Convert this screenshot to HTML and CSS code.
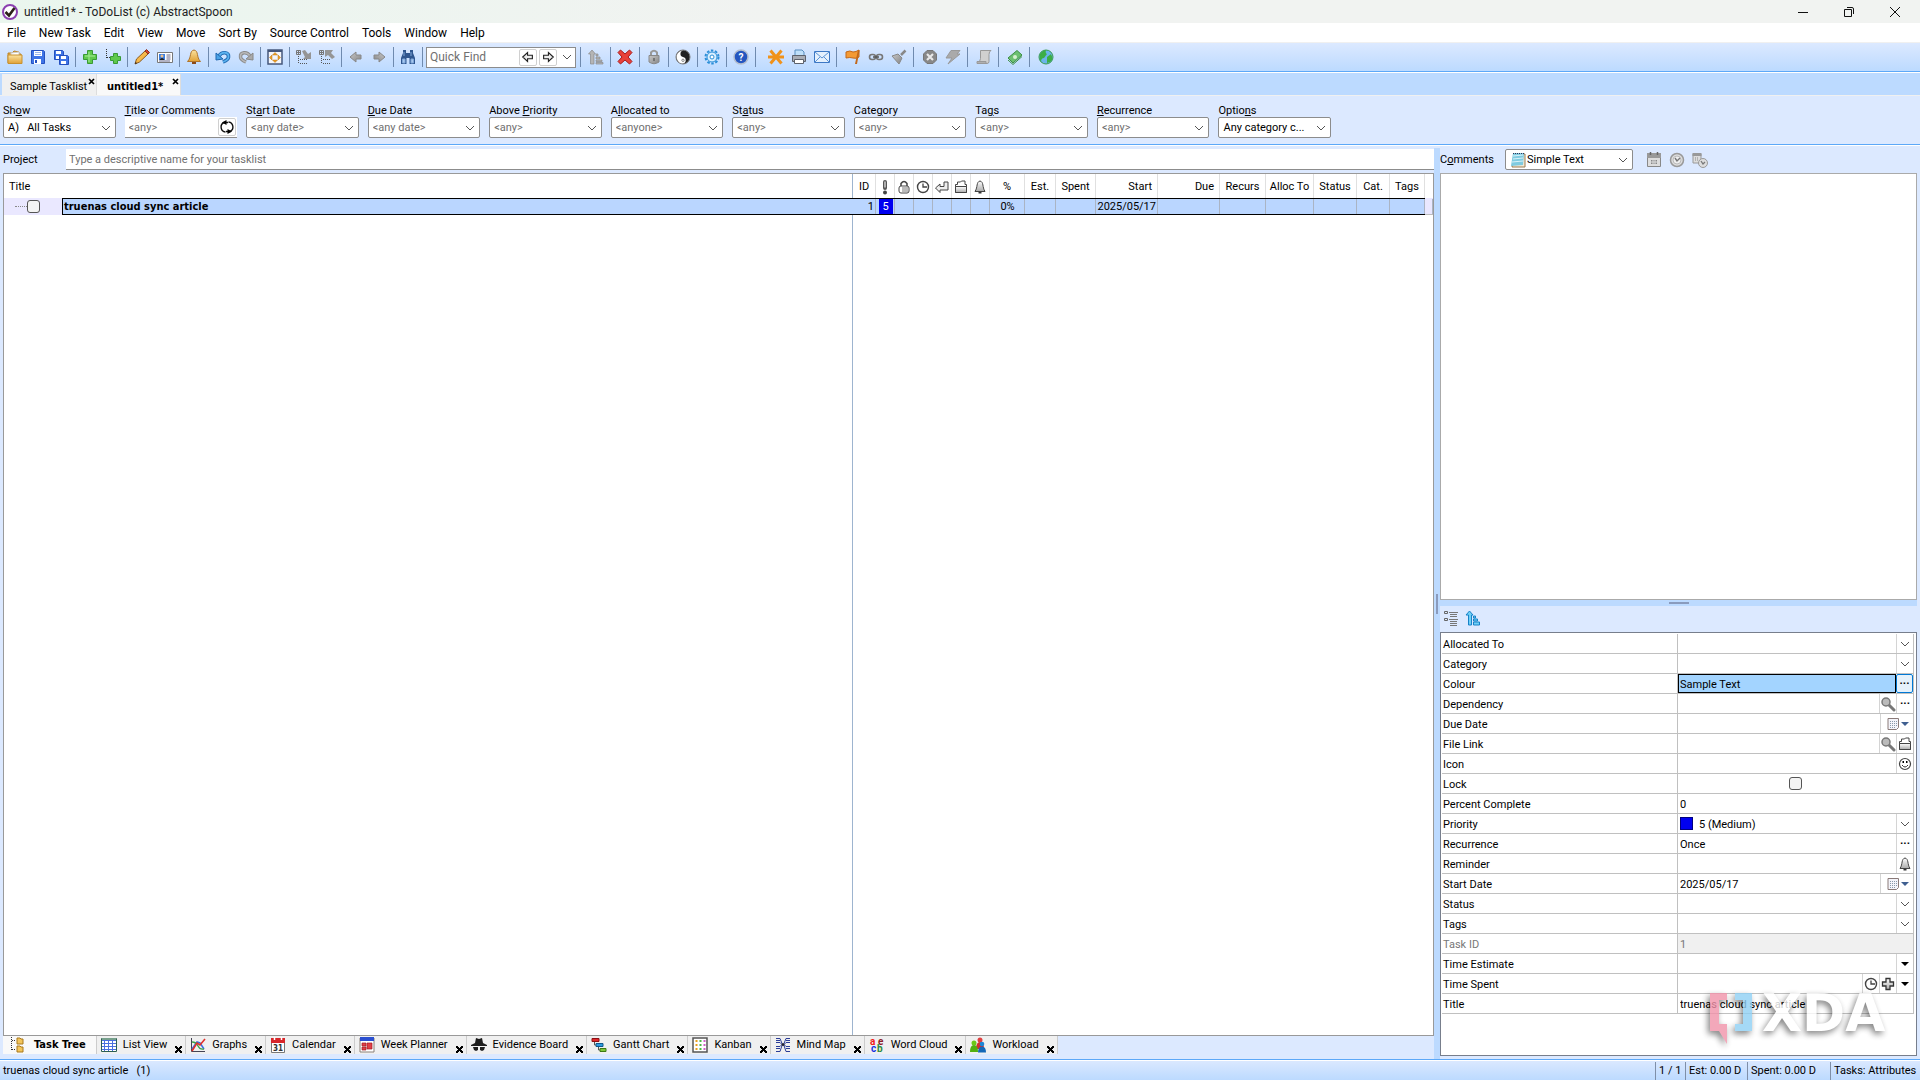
FILE: index.html
```
<!DOCTYPE html>
<html lang="en">
<head>
<meta charset="utf-8">
<title>untitled1* - ToDoList (c) AbstractSpoon</title>
<link rel="stylesheet" href="styles.css">
</head>
<body>
<svg class="defs" aria-hidden="true">
  <defs>
    <linearGradient id="g-gold" x1="0" y1="0" x2="0" y2="1"><stop offset="0" stop-color="#fbe3a0"/><stop offset="1" stop-color="#e0a136"/></linearGradient>
    <linearGradient id="g-grey" x1="0" y1="0" x2="1" y2="1"><stop offset="0" stop-color="#c8c8c8"/><stop offset="1" stop-color="#858585"/></linearGradient>
    <linearGradient id="g-steel" x1="0" y1="0" x2="0" y2="1"><stop offset="0" stop-color="#fff"/><stop offset="1" stop-color="#aaa"/></linearGradient>
  </defs>
  <symbol id="magnifier" viewBox="0 0 16 16"><path d="M9 9l5 5" stroke="#777" stroke-width="3" stroke-linecap="round"/><circle cx="6" cy="6" r="4" fill="#bbb" stroke="#777" stroke-width="1.5"/></symbol>
  <symbol id="bell" viewBox="0 0 16 16"><path d="M8 2c-4 1-2 6-5 10.500h10C10 8 12 3 8 2z" fill="url(#g-steel)" stroke="#444"/><path d="M6.500 13h3v1.500h-3z" fill="#333"/></symbol>
  <symbol id="clock" viewBox="0 0 16 16"><circle cx="8" cy="8" r="5.500" fill="#fff" stroke="#444" stroke-width="1.400"/><path d="M8 4.500V8h4" fill="none" stroke="#444" stroke-width="1.300"/></symbol>
  <symbol id="folder" viewBox="0 0 16 16"><path d="M2.500 13.500v-8h2V3h3l1-1H12v3.500h1.500v8z" fill="#fff" stroke="#444"/><path d="M2.500 7.500h11v6h-11z" fill="url(#g-steel)" stroke="#444"/></symbol>
  <symbol id="datepick" viewBox="0 0 16 16"><path d="M3 2.500h10.500v9l-2 2H3z" fill="#f4f4fa" stroke="#8a7a78"/><path d="M5 5.500h7M5 7.500h7M5 9.500h7M5 11.500h5" stroke="#89a" stroke-dasharray="1 1"/></symbol>
  <symbol id="left" viewBox="0 0 16 16"><path d="M2 8l6-5v3h5v4H8v3z" fill="url(#g-grey)" stroke="#888"/></symbol>
  <symbol id="outleft" viewBox="0 0 16 16"><path d="M2 8l5.500-5v3H13v4H7.500v3z" fill="#eee" stroke="#222" stroke-width="1.300"/></symbol>
</svg>

<div class="app">
  <header class="titlebar">
    <svg class="logo" viewBox="0 0 18 18"><circle cx="9" cy="9" r="7" fill="#fff" stroke="#8b3fb0" stroke-width="2"/><path d="M4.500 9l3.500 3.500L13.500 5" fill="none" stroke="#2a2018" stroke-width="2.600"/></svg>
    <h1>untitled1* - ToDoList (c) AbstractSpoon</h1>
    <div class="winbtns">
      <button aria-label="Minimize"><svg viewBox="0 0 12 12"><path d="M1 6.500h10" stroke="#111"/></svg></button>
      <button aria-label="Restore"><svg viewBox="0 0 12 12"><path d="M1.500 3.500h7v7h-7zM4 1.500h5q1.500 0 1.500 1.500v5" fill="none" stroke="#111"/></svg></button>
      <button aria-label="Close"><svg viewBox="0 0 12 12"><path d="M1 1l10 10M11 1L1 11" stroke="#111"/></svg></button>
    </div>
  </header>

  <nav class="menubar">
    <button>File</button><button>New Task</button><button>Edit</button><button>View</button><button>Move</button><button>Sort By</button><button>Source Control</button><button>Tools</button><button>Window</button><button>Help</button>
  </nav>

  <div class="toolbar" role="toolbar">
    <button aria-label="Open"><svg viewBox="0 0 16 16"><path d="M1 14V4h4l2-2 5 1v2h2v9z" fill="#e9a93a" stroke="#b9842b"/><path d="M4 4l8-1v4H4z" fill="#fff" stroke="#ccc"/><path d="M1 14.500V6h14v8.500z" fill="url(#g-gold)" stroke="#c8912f"/></svg></button>
    <button aria-label="Save"><svg viewBox="0 0 16 16"><path d="M1.500 1.500h12l1 1v12h-13z" fill="#3f74e6" stroke="#2450c0"/><path d="M4 2h8v5H4zM4 10h7v5H4z" fill="#fff"/><path d="M5 3.500h6M5 5.500h6" stroke="#9bb6ee"/><path d="M5 11h2v3H5z" fill="#2450c0"/></svg></button>
    <button aria-label="Save all"><svg viewBox="0 0 16 16"><g id="fl"><path d="M1.500 1.500h8l1 1v8h-9z" fill="#3f74e6" stroke="#2450c0"/><path d="M3 2h5v3H3zM3 7h5v3H3z" fill="#fff"/></g><use href="#fl" x="5" y="5"/></svg></button>
    <span class="sep"></span>
    <button aria-label="New task"><svg viewBox="0 0 16 16"><path d="M5.500 1.500h5v4h4v5h-4v4h-5v-4h-4v-5h4z" fill="#5fc94c" stroke="#3a9a35"/><path d="M7 3v10M3 7h10" stroke="#a8ec98"/></svg></button>
    <button aria-label="New subtask"><svg viewBox="0 0 16 16"><path d="M1.500 0v9M2 8.500h4" stroke="#333" stroke-dasharray="1 1"/><path d="M8.500 4.500h4v3h3v4h-3v3h-4v-3h-3v-4h3z" fill="#5fc94c" stroke="#3a9a35"/></svg></button>
    <span class="sep"></span>
    <button aria-label="Edit task"><svg viewBox="0 0 16 16"><path d="M1 15l1.500-5L11 2l3 3-8.500 8z" fill="#f6b94a" stroke="#8a5a20"/><path d="M11 2l1.500-1.500 3 3L14 5z" fill="#d8442e" stroke="#8a3020"/><path d="M1 15l.7-2 1.300 1.200z" fill="#222"/></svg></button>
    <button aria-label="Edit attributes"><svg viewBox="0 0 16 16"><path d="M.5 3.500h15v10H.5z" fill="#fff" stroke="#777"/><path d="M2 5h6v6H2z" fill="#3b7fe0"/><circle cx="5" cy="7" r="1.500" fill="#eec08a"/><path d="M2.500 11q2.500-4 5 0z" fill="#222"/><path d="M9.500 6h4M9.500 8h4M9.500 10h4M2 12h11" stroke="#668"/></svg></button>
    <span class="sep"></span>
    <button aria-label="Reminder"><svg viewBox="0 0 16 16"><path d="M8 1C3 2 6 8 1.500 12.500h13C10 8 13 2 8 1z" fill="url(#g-gold)" stroke="#b0752a"/><path d="M6 13h4v2H6z" fill="#8a4a18"/></svg></button>
    <span class="sep"></span>
    <button aria-label="Undo"><svg viewBox="0 0 16 16"><path d="M4 7c3-5 10-4 9.500 1-.3 3-3 4-5.500 5" fill="none" stroke="#1f67b0" stroke-width="3.600"/><path d="M4 7c3-5 10-4 9.500 1-.3 3-3 4-5.500 5" fill="none" stroke="#5bb2ee" stroke-width="1.800"/><path d="M1 4v7l7-1z" fill="#4aa3e6" stroke="#1f67b0"/></svg></button>
    <button aria-label="Redo"><svg viewBox="0 0 16 16"><path d="M12 7C9 2 2 3 2.500 8c.3 3 3 4 5.500 5" fill="none" stroke="#8a8a8a" stroke-width="3.400"/><path d="M12 7C9 2 2 3 2.500 8c.3 3 3 4 5.500 5" fill="none" stroke="#b8b8b8" stroke-width="1.600"/><path d="M15 4v7l-7-1z" fill="#aaa" stroke="#888"/></svg></button>
    <span class="sep"></span>
    <button aria-label="Maximize"><svg viewBox="0 0 16 16"><path d="M1 1h14v14H1z" fill="#f4f6fb" stroke="#46587c" stroke-width="1.500"/><path d="M1 2h14" stroke="#46587c" stroke-width="2"/><path d="M8 3.500l2.500 2.500h-5zM8 13.500L5.500 11h5zM2.500 8.500L5 6v5zM13.500 8.500L11 6v5z" fill="#f0a020" stroke="#b8741a" stroke-width=".5"/></svg></button>
    <span class="sep"></span>
    <button aria-label="Expand"><svg viewBox="0 0 16 16"><path d="M.5 1.500h4v4h-4zM2.500 1v5M0 3.500h5" fill="none" stroke="#777"/><path d="M2.500 7v8M4 10.500h8M4 14.500h8" fill="none" stroke="#555" stroke-dasharray="1 1"/><path d="M6 2l3-1 3 4 3-2v7H7l2-2z" fill="#959595"/></svg></button>
    <button aria-label="Collapse"><svg viewBox="0 0 16 16"><path d="M.5 1.500h4v4h-4zM2.500 1v5M0 3.500h5" fill="none" stroke="#777"/><path d="M2.500 7v8M4 10.500h8M4 14.500h8" fill="none" stroke="#555" stroke-dasharray="1 1"/><path d="M6 1h8l-2 3 4 4-3 2-4-4-3 2z" fill="#959595"/></svg></button>
    <span class="sep"></span>
    <button aria-label="Back"><svg><use href="#left"/></svg></button>
    <button aria-label="Forward"><svg class="flip"><use href="#left"/></svg></button>
    <span class="sep"></span>
    <button aria-label="Find tasks"><svg viewBox="0 0 16 16"><path d="M3 1h3v3h4V1h3v3l2 5v6H9.500V9h-3v6H1V9l2-5z" fill="#2f568f"/><path d="M2.500 10h2.500v4H2.500zM11 10h2.500v4H11zM4 3v4M11 3v4" fill="#a8c8ee" stroke="#7fa6d8"/></svg></button>
    <span class="sep"></span>
    <div class="find">
      <input type="text" placeholder="Quick Find" aria-label="Quick Find">
      <button aria-label="Find previous"><svg><use href="#outleft"/></svg></button>
      <button aria-label="Find next"><svg class="flip"><use href="#outleft"/></svg></button>
      <button class="drop" aria-label="Find history"><svg viewBox="0 0 10 10"><path d="M1 3l4 4 4-4" fill="none" stroke="#555"/></svg></button>
    </div>
    <span class="sep lead"></span>
    <button aria-label="Sort"><svg viewBox="0 0 16 16"><path d="M4 1l3.500 4H6v10H2.500V5H.5zM8 5h2v2H8zM8 8h4v2H8zM8 11h6v1.500H8zM8 13.500h7V15H8z" fill="#b5b5b5" stroke="#8a8a8a" stroke-width=".7"/></svg></button>
    <span class="sep"></span>
    <button aria-label="Delete"><svg viewBox="0 0 16 16"><path d="M1 3.500L3.500 1 8 5l4.500-4L15 3.500 11 8l4 4.500-2.500 2.500L8 11l-4.500 4L1 12.500 5 8z" fill="#e8413a" stroke="#a81c1c"/></svg></button>
    <span class="sep"></span>
    <button aria-label="Lock"><svg viewBox="0 0 16 16"><path d="M5 7V3.500q3-3.500 6 0V7" fill="none" stroke="#999" stroke-width="2"/><path d="M3 6.500h10V13q-5 3.500-10 0z" fill="url(#g-grey)" stroke="#888"/><path d="M8 9v3" stroke="#666" stroke-width="1.500"/></svg></button>
    <span class="sep"></span>
    <button aria-label="Style"><svg viewBox="0 0 16 16"><circle cx="8" cy="8" r="7" fill="#222" stroke="#777"/><path d="M9 1.500a3.300 3.300 0 0 0-1 6.500 3.300 3.300 0 0 1 0 6.500A6.500 6.500 0 0 1 4 3q2-2 5-1.500z" fill="#fff"/><circle cx="8.500" cy="4.700" r="1.200" fill="#222"/><circle cx="8" cy="11.300" r="1.200" fill="#fff" stroke="#222" stroke-width=".5"/></svg></button>
    <span class="sep"></span>
    <button aria-label="Preferences"><svg viewBox="0 0 16 16"><circle cx="8" cy="8" r="6.500" fill="none" stroke="#2b8fd8" stroke-width="2" stroke-dasharray="2.500 1.600"/><circle cx="8" cy="8" r="5" fill="#d8efff" stroke="#2b8fd8"/><circle cx="8" cy="8" r="2" fill="#fff" stroke="#2b8fd8"/></svg></button>
    <span class="sep"></span>
    <button aria-label="Help"><svg viewBox="0 0 16 16"><circle cx="8" cy="8" r="7" fill="#2456c0" stroke="#b4bece" stroke-width="1.500"/><text x="8" y="12" text-anchor="middle" class="glyph">?</text></svg></button>
    <span class="sep"></span><span class="space"></span>
    <button aria-label="New feature"><svg viewBox="0 0 16 16"><path d="M2.500 1.500l11 13M13.500 1.500l-11 13M0 8h16" stroke="#f0921a" stroke-width="3"/></svg></button>
    <button aria-label="Print"><svg viewBox="0 0 16 16"><path d="M4 7V1h7l2 2v4" fill="#bfe0fa" stroke="#5a8fc0"/><path d="M1.500 6.500h13v6h-13z" fill="#a9adb5" stroke="#5d626c"/><path d="M3.500 10.500h9v4h-9z" fill="#fff" stroke="#5d626c"/></svg></button>
    <button aria-label="Email"><svg viewBox="0 0 16 16"><path d="M.5 2.500h15v11H.5z" fill="#e4f0fd" stroke="#3d78c4"/><path d="M1 3l7 6 7-6M1 13l5-5M15 13l-5-5" fill="none" stroke="#5b93d6"/></svg></button>
    <span class="sep wide"></span>
    <button aria-label="Flag"><svg viewBox="0 0 16 16"><path d="M1 3q4-2 7 0 3 0 6-2v7q-3 2-6 1-3-1-7 0z" fill="#f49a34" stroke="#c2681a"/><path d="M13 1l1.500.5L12 15h-2z" fill="#c2681a"/></svg></button>
    <button aria-label="Link"><svg viewBox="0 0 16 16"><rect x="1.500" y="5.500" width="6" height="5" rx="2.500" fill="none" stroke="#777" stroke-width="1.600"/><rect x="8.500" y="5.500" width="6" height="5" rx="2.500" fill="none" stroke="#777" stroke-width="1.600"/><path d="M5 8h6" stroke="#555" stroke-width="1.500"/></svg></button>
    <button aria-label="Clean up"><svg viewBox="0 0 16 16"><path d="M14.500 1.500L10 6" stroke="#888" stroke-width="2.500"/><path d="M1 7l6-2 4 4-3 6z" fill="url(#g-grey)" stroke="#888"/></svg></button>
    <span class="sep wide"></span>
    <button aria-label="Cancel"><svg viewBox="0 0 16 16"><path d="M5 1.500h6L14.500 5v6L11 14.500H5L1.500 11V5z" fill="#888" stroke="#777"/><path d="M5 5l6 6M11 5l-6 6" stroke="#e8e8e8" stroke-width="2.200"/></svg></button>
    <button aria-label="Run"><svg viewBox="0 0 16 16"><path d="M6 1.500h9L12 5h3L3 15l4-6H1z" fill="#aaa" stroke="#999"/></svg></button>
    <span class="sep wide"></span>
    <button aria-label="Script"><svg viewBox="0 0 16 16"><path d="M4.500 1.500H15q-2 1-2 4v7q0 2-2 2H2q2-2 2.500-5z" fill="#d0d0d0" stroke="#999"/><path d="M1 12.500h9v2H1z" fill="#b0b0b0" stroke="#999"/></svg></button>
    <span class="sep wide"></span>
    <button aria-label="Donate"><svg viewBox="0 0 16 16"><path d="M1 9l9-7.500 5 4.500-9 8z" fill="#6cc070" stroke="#3d8f45"/><path d="M1 11l5 4.500 9-8" fill="none" stroke="#3d8f45"/><circle cx="8" cy="8" r="2" fill="#d6f0d0"/></svg></button>
    <span class="sep wide"></span>
    <button aria-label="Web site"><svg viewBox="0 0 16 16"><circle cx="8" cy="8" r="7" fill="#6ab4ea" stroke="#3a9a50"/><path d="M2 5q3-4 6-4-1 3 1 4l-3 4q-3 0-3 4-2-3-1-8zM9 8l4-3q2 3 1 6-2 3-5 3z" fill="#3cae46"/></svg></button>
  </div>

  <div class="tabs">
    <div class="tab"><a href="#sample">Sample Tasklist</a><button aria-label="Close Sample Tasklist"><svg viewBox="0 0 7 7"><path d="M1 1l5 5M6 1L1 6" stroke="#000" stroke-width="1.700"/></svg></button></div>
    <div class="tab on"><a href="#untitled">untitled1*</a><button aria-label="Close untitled1"><svg viewBox="0 0 7 7"><path d="M1 1l5 5M6 1L1 6" stroke="#000" stroke-width="1.700"/></svg></button></div>
  </div>

  <form class="filters">
    <label>Sh<u>o</u>w<select class="dark"><option>A) &nbsp; All Tasks</option></select></label>
    <div class="field"><label for="ftitle"><u>T</u>itle or Comments</label><span class="textbox"><input id="ftitle" type="text" placeholder="&lt;any&gt;"><button type="button" aria-label="Refresh"><svg viewBox="0 0 16 16"><path d="M6.500 13A5 5 0 0 1 5 3.500h4M9.500 3a5 5 0 0 1 1.500 9.500H7" fill="none" stroke="#111" stroke-width="1.400"/><path d="M7.500 1v5L3 3.500zM8.500 10v5l4.500-2.500z"/></svg></button></span></div>
    <label>St<u>a</u>rt Date<select><option>&lt;any date&gt;</option></select></label>
    <label><u>D</u>ue Date<select><option>&lt;any date&gt;</option></select></label>
    <label>Above <u>P</u>riority<select><option>&lt;any&gt;</option></select></label>
    <label>A<u>l</u>located to<select><option>&lt;anyone&gt;</option></select></label>
    <label>St<u>a</u>tus<select><option>&lt;any&gt;</option></select></label>
    <label>Cate<u>g</u>ory<select><option>&lt;any&gt;</option></select></label>
    <label>Ta<u>g</u>s<select><option>&lt;any&gt;</option></select></label>
    <label><u>R</u>ecurrence<select><option>&lt;any&gt;</option></select></label>
    <label>Optio<u>n</u>s<select class="dark"><option>Any category c...</option></select></label>
  </form>

  <main class="work">
    <section class="left">
      <div class="project"><label for="proj">Pro<u>j</u>ect</label><input id="proj" type="text" placeholder="Type a descriptive name for your tasklist"></div>
      <div class="tasklist">
        <table>
          <colgroup><col><col class="w-id"><col class="w-ic" span="6"><col class="w-pc"><col class="w-est"><col class="w-sp"><col class="w-date"><col class="w-date"><col class="w-rec"><col class="w-all"><col class="w-sta"><col class="w-cat"><col class="w-tag"><col class="w-end"></colgroup>
          <thead><tr>
            <th class="name">Title</th><th>ID</th>
            <th><svg viewBox="0 0 16 16"><path d="M8 3v6" stroke="#555" stroke-width="4" stroke-linecap="round"/><path d="M8 2.500v6" stroke="#ccc" stroke-width="1.500"/><circle cx="8" cy="13.500" r="2" fill="#444"/></svg></th>
            <th><svg viewBox="0 0 16 16"><path d="M5 7V4.500q3-4 6 0V7" fill="none" stroke="#444" stroke-width="1.500"/><rect x="3" y="7" width="10" height="7" rx="2" fill="#fff" stroke="#444"/><path d="M7 8v5M9 8v5M11 8v5" stroke="#777"/></svg></th>
            <th><svg><use href="#clock"/></svg></th>
            <th><svg viewBox="0 0 16 16"><path d="M1.500 9L6 5v2.500h4V3h4v8H6v2.500z" fill="#eee" stroke="#444"/></svg></th>
            <th><svg><use href="#folder"/></svg></th>
            <th><svg><use href="#bell"/></svg></th>
            <th>%</th><th>Est.</th><th>Spent</th><th class="r">Start</th><th class="r">Due</th><th>Recurs</th><th>Alloc To</th><th>Status</th><th>Cat.</th><th>Tags</th><th></th>
          </tr></thead>
          <tbody><tr>
            <td class="name"><div class="cell"><span class="tree"></span><input type="checkbox" aria-label="Done"><span class="task">truenas cloud sync article</span></div></td>
            <td class="r">1</td><td class="prio"><span>5</span></td><td></td><td></td><td></td><td></td><td></td><td>0%</td><td></td><td></td><td class="r">2025/05/17</td><td></td><td></td><td></td><td></td><td></td><td></td><td class="end"></td>
          </tr></tbody>
        </table>
      </div>
      <nav class="views">
        <a class="on" href="#tree"><svg viewBox="0 0 16 16"><path d="M1.500 0v14M2 3.500h4M2 12.500h4" stroke="#333" stroke-dasharray="1 1"/><path d="M7 1h3l1 1h2v5H7zM7 9h3l1 1h2v5H7z" fill="#f3c55a" stroke="#a9781c"/></svg>Task Tree</a>
        <a href="#list"><svg viewBox="0 0 16 16"><path d="M0 1h16v14H0z" fill="#fff"/><path d="M1 3.500h14M1 6.500h14M1 9.500h14M1 12.500h14M3.500 1v14M7.500 1v14M11.500 1v14" stroke="#4a6fe0"/><path d="M.5 1.500h15v13H.5z" fill="none" stroke="#2d5f50"/><path d="M1 2h14" stroke="#77a08c" stroke-width="2"/></svg>List View<i></i></a>
        <a href="#graphs"><svg viewBox="0 0 16 16"><path d="M1.500 1v13.500H15" fill="none" stroke="#445"/><path d="M2 12l5-7 3 1 4 6" fill="none" stroke="#3b6fe0" stroke-width="1.500"/><path d="M2 5q4 0 6 4t6 3" fill="none" stroke="#3aa04a" stroke-width="1.300"/><path d="M2 14l5-8 3 2 5-6" fill="none" stroke="#e0302a" stroke-width="1.600"/></svg>Graphs<i></i></a>
        <a href="#calendar"><svg viewBox="0 0 16 16"><path d="M1.500 2.500h13v13h-13z" fill="#fff" stroke="#777"/><path d="M1 1h14v5H1z" fill="#d8262a"/><path d="M4.500 0v3M11.500 0v3" stroke="#fff" stroke-width="1.500"/><text x="8" y="14" text-anchor="middle" class="day">31</text></svg>Calendar<i></i></a>
        <a href="#week"><svg viewBox="0 0 16 16"><path d="M1 1h14v14H1z" fill="#fff" stroke="#8a8078"/><path d="M1 0h14v4H1z" fill="#2a4fd0"/><path d="M3 6h4v3H3zM8 6h5v6H8zM3 10h4v3H3z" fill="#e04048" stroke="#a01820" stroke-width=".7"/></svg>Week Planner<i></i></a>
        <a href="#evidence"><svg viewBox="0 0 16 16"><path d="M4 6l1-5 3 1 3-1 1 5 4 2v1H0V8zM2 10h5v3l-2 1-2-1zM9 10h5l-1 3-2 1-2-1z" fill="#1c1c1c"/></svg>Evidence Board<i></i></a>
        <a href="#gantt"><svg viewBox="0 0 16 16"><path d="M1 1.500h7v3H1z" fill="#e0282c" stroke="#8c1014"/><path d="M5 6.500h7v3H5z" fill="#2b9be0" stroke="#10588c"/><path d="M9 11.500h6v3H9z" fill="#7fc83a" stroke="#3c7a14"/><path d="M3.500 5v3H5M7.500 10v3H9" fill="none" stroke="#555"/></svg>Gantt Chart<i></i></a>
        <a href="#kanban"><svg viewBox="0 0 16 16"><path d="M1 1h14v14H1z" fill="#fff" stroke="#555" stroke-width="1.500"/><path d="M4.500 3v11" stroke="#e8a020" stroke-width="2" stroke-dasharray="2 2"/><path d="M8.500 3v11" stroke="#50b848" stroke-width="2" stroke-dasharray="2 2"/><path d="M12.500 3v11" stroke="#d060c8" stroke-width="2" stroke-dasharray="2 2"/></svg>Kanban<i></i></a>
        <a href="#mindmap"><svg viewBox="0 0 16 16"><path d="M1 1.500h4l2 5M1 5.500h4l2 2M1 9.500h4l2-2M1 14.500h4l2-6M15 1.500h-4l-2 5M15 5.500h-4l-2 2M15 9.500h-4l-2-2M15 14.500h-4l-2-6M1 3.500h4M1 11.500h4M15 3.500h-4M15 11.500h-4" fill="none" stroke="#2a3c98"/><circle cx="8" cy="7.500" r="1.500" fill="#223"/></svg>Mind Map<i></i></a>
        <a href="#wordcloud"><svg viewBox="0 0 16 16"><text x="1" y="8" class="wc" fill="#f01818">a</text><text x="9" y="8" class="wc" fill="#8c1c28">e</text><text x="2" y="15" class="wc" fill="#1830e0">c</text><text x="8" y="15" class="wc" fill="#2c8a3c">b</text></svg>Word Cloud<i></i></a>
        <a href="#workload"><svg viewBox="0 0 16 16"><circle cx="10" cy="3" r="2.500" fill="#e04040"/><path d="M6 12q0-7 4-7t4 7z" fill="#d03030"/><circle cx="4" cy="6" r="2.500" fill="#6cc818"/><path d="M0 15q0-7 4-7t4 7z" fill="#52b010"/><circle cx="12" cy="7" r="2.300" fill="#1c86d8"/><path d="M8 15.500q0-6 4-6t4 6z" fill="#1468b8"/></svg>Workload<i></i></a>
      </nav>
    </section>

    <div class="vsplit"></div>

    <aside class="right">
      <div class="comhead">
        <label for="ctype">C<u>o</u>mments</label>
        <span class="ctype"><svg viewBox="0 0 16 16"><path d="M4 2h11v13H2z" fill="#f3e9d4" stroke="#9a7a50"/><path d="M3 1h11l-1 12-12 1z" fill="#7fcbe0"/><path d="M3 4l10-1M3 7l10-1M2 10l11-1" stroke="#d8f2fa"/><path d="M3 1.500h11" stroke="#335" stroke-dasharray="1 1"/></svg><select id="ctype" class="dark"><option>Simple Text</option></select></span>
        <button aria-label="Insert date"><svg viewBox="0 0 16 16"><path d="M1.500 2.500h13v12h-13z" fill="#ddd" stroke="#888"/><path d="M1 1h14v5H1z" fill="#999"/><path d="M4.500 0v3M11.500 0v3" stroke="#666" stroke-width="1.500"/><path d="M5 8h6v4H5z" fill="#888"/><path d="M5 10h6M7 8v4M9 8v4" stroke="#ddd"/></svg></button>
        <button aria-label="Insert time"><svg viewBox="0 0 16 16"><circle cx="8" cy="8" r="6.500" fill="#ddd" stroke="#999" stroke-width="1.500"/><circle cx="8" cy="8" r="4" fill="#eee" stroke="#bbb"/><path d="M6 6l2 3 3-3" fill="none" stroke="#777" stroke-width="1.400"/></svg></button>
        <button aria-label="Insert date and time"><svg viewBox="0 0 16 16"><path d="M1 2h8v9H1z" fill="#ddd" stroke="#999"/><path d="M.5 1h9v3h-9z" fill="#999"/><path d="M3 6h4M3 8h4" stroke="#888" stroke-dasharray="1 1"/><circle cx="11" cy="11" r="4.500" fill="#ddd" stroke="#999"/><path d="M9 9l2 3 2-2" fill="none" stroke="#777" stroke-width="1.300"/></svg></button>
      </div>
      <textarea aria-label="Comments"></textarea>
      <div class="hsplit"></div>
      <div class="atthead">
        <button aria-label="Group"><svg viewBox="0 0 16 16"><path d="M1.500 1.500h3v2h-3zM1.500 8.500h3v2h-3z" fill="none" stroke="#666"/><path d="M6 2.500h9M7 4.500h7M7 6.500h7M6 9.500h9M7 11.500h7M7 13.500h7M7 15.500h7" stroke="#777"/></svg></button>
        <button aria-label="Sort"><svg viewBox="0 0 16 16"><path d="M4.500 1l3.500 4H6.500v10h-3V5H1zM8.500 6h2v2h-2zM8.500 9h4v2h-4zM8.500 12h6v3h-6z" fill="#6fd0f6" stroke="#1682c8"/></svg></button>
      </div>
      <div class="attrs">
        <table>
          <tr><th><label for="a1">Allocated To</label></th><td><div><select id="a1"><option></option></select></div></td></tr>
          <tr><th><label for="a2">Category</label></th><td><div><select id="a2"><option></option></select></div></td></tr>
          <tr><th><label for="a3">Colour</label></th><td><div><input class="colour" id="a3" value="Sample Text"><button class="hot" aria-label="Choose colour">···</button></div></td></tr>
          <tr><th><label for="a4">Dependency</label></th><td><div><input id="a4"><button aria-label="Go to"><svg><use href="#magnifier"/></svg></button><button aria-label="Edit dependency">···</button></div></td></tr>
          <tr><th><label for="a5">Due Date</label></th><td><div><input id="a5"><button class="date" aria-label="Pick due date"><svg><use href="#datepick"/></svg><b></b></button></div></td></tr>
          <tr><th><label for="a6">File Link</label></th><td><div><input id="a6"><button aria-label="View file"><svg><use href="#magnifier"/></svg></button><button aria-label="Browse"><svg><use href="#folder"/></svg></button></div></td></tr>
          <tr><th><label for="a7">Icon</label></th><td><div><input id="a7"><button aria-label="Choose icon"><svg viewBox="0 0 16 16"><circle cx="8" cy="8" r="5.500" fill="#fff" stroke="#444" stroke-width="1.200"/><path d="M5 9q3 4 6 0" fill="none" stroke="#333"/><path d="M5.500 5h1.500v2H5.500zM9 5h1.500v2H9z"/></svg></button></div></td></tr>
          <tr><th><label for="a8">Lock</label></th><td><div class="mid"><input type="checkbox" id="a8"></div></td></tr>
          <tr><th><label for="a9">Percent Complete</label></th><td><div><input id="a9" value="0"></div></td></tr>
          <tr><th><label for="a10">Priority</label></th><td><div><span class="swatch"></span><select id="a10"><option>5 (Medium)</option></select></div></td></tr>
          <tr><th><label for="a11">Recurrence</label></th><td><div><input id="a11" value="Once"><button aria-label="Edit recurrence">···</button></div></td></tr>
          <tr><th><label for="a12">Reminder</label></th><td><div><input id="a12"><button aria-label="Set reminder"><svg><use href="#bell"/></svg></button></div></td></tr>
          <tr><th><label for="a13">Start Date</label></th><td><div><input id="a13" value="2025/05/17"><button class="date" aria-label="Pick start date"><svg><use href="#datepick"/></svg><b></b></button></div></td></tr>
          <tr><th><label for="a14">Status</label></th><td><div><select id="a14"><option></option></select></div></td></tr>
          <tr><th><label for="a15">Tags</label></th><td><div><select id="a15"><option></option></select></div></td></tr>
          <tr class="off"><th><label for="a16">Task ID</label></th><td><div><input id="a16" value="1" disabled></div></td></tr>
          <tr><th><label for="a17">Time Estimate</label></th><td><div><input id="a17"><button aria-label="Units"><b class="blk"></b></button></div></td></tr>
          <tr><th><label for="a18">Time Spent</label></th><td><div><input id="a18"><button aria-label="Track time"><svg><use href="#clock"/></svg></button><button aria-label="Add time"><svg viewBox="0 0 16 16"><path d="M6 2.500h4V6h3.500v4H10v3.500H6V10H2.500V6H6z" fill="url(#g-steel)" stroke="#333" stroke-width="1.300"/></svg></button><button aria-label="Units"><b class="blk"></b></button></div></td></tr>
          <tr><th><label for="a19">Title</label></th><td><div><input id="a19" value="truenas cloud sync article"></div></td></tr>
        </table>
        <svg class="mark" viewBox="0 0 190 60"><g><path d="M19 4H2v38h9l8 13V35h-8V11h8z" fill="#f193aa"/><path d="M27 4h17v38H27v-7h8V11h-8z" fill="#8fd0f4"/><text x="54" y="42">XDA</text></g></svg>
      </div>
    </aside>
  </main>

  <footer class="status"><span class="grow">truenas cloud sync article &nbsp; (1)</span><span class="s1">1 / 1</span><span class="s2">Est: 0.00 D</span><span class="s3">Spent: 0.00 D</span><span class="s4">Tasks: Attributes</span></footer>
</div>
</body>
</html>
```
FILE: styles.css
```
:root {
  --pale: #dce9ff;
  --sky: #bcdaff;
  --rule: #5ca8f8;
  --edge: #8c8c8c;
  --chev: url("data:image/svg+xml,%3Csvg xmlns='http://www.w3.org/2000/svg' width='10' height='10'%3E%3Cpath d='M1 3l4 4 4-4' fill='none' stroke='%23555'/%3E%3C/svg%3E");
}
* { box-sizing: border-box; }
body { margin: 0; font: 11px/14px Roboto, sans-serif; color: #000; }
button, input, select, textarea { font: inherit; color: inherit; margin: 0; padding: 0; border: 0; border-radius: 0; background: none; outline: 0; min-width: 0; }
button { display: flex; align-items: center; justify-content: center; }
svg { width: 16px; height: 16px; flex: none; display: block; }
a { color: inherit; text-decoration: none; }
u { text-underline-offset: 1px; }
.defs { position: absolute; width: 0; height: 0; }
.flip { transform: scaleX(-1); }
.app { display: flex; flex-direction: column; min-height: 100vh; background: var(--pale); }

.titlebar { display: flex; align-items: center; height: 23px; padding-left: 1px; background: linear-gradient(90deg, #eaf6ee, #f1f3f1 40%); }
.logo { width: 18px; height: 18px; }
.titlebar h1 { flex: 1; margin: 0 0 0 5px; font-size: 12px; font-weight: 400; color: #222; }
.winbtns { display: flex; margin-right: 2px; }
.winbtns button { width: 46px; height: 20px; }
.winbtns svg { width: 12px; height: 12px; }

.menubar { display: flex; height: 20px; padding-top: 1px; background: #fff; border-bottom: 1px solid #f0f0f0; font-size: 12px; }
.menubar button { padding: 0 6px 0 7px; }

.toolbar { display: flex; align-items: center; height: 29px; padding-left: 3px; background: linear-gradient(var(--pale), var(--sky)); border-bottom: 1px solid var(--rule); }
.toolbar > button { width: 23px; height: 24px; }
.sep { width: 6px; height: 20px; background: linear-gradient(#6f8aae, #6f8aae) no-repeat 3px 0 / 1px 100%; }
.sep.lead { width: 8px; background-position-x: 4px; }
.sep.wide { width: 8px; }
.space { width: 6px; }
.glyph { font: bold 10px Roboto, sans-serif; fill: #fff; }
.find { display: flex; align-items: center; gap: 2px; width: 150px; height: 21px; margin-left: 1px; background: #fff; border: 1px solid var(--edge); }
.find input { flex: 1; padding-left: 3px; font-size: 12px; }
.find button { width: 18px; height: 17px; border: 1px solid #d0d0d0; border-radius: 2px; }
.find svg { width: 14px; height: 14px; }
.find .drop { width: 16px; border: 0; }
.drop svg { width: 10px; height: 10px; }
::placeholder { color: #707070; opacity: 1; }

.tabs { display: flex; height: 24px; padding: 1px 0 0 2px; background: var(--sky); border-top: 1px solid #fff; border-bottom: 1px solid #f0f0f0; }
.tab { display: flex; justify-content: space-between; width: 95px; padding: 4px 1px 0 8px; background: #f0f0f0; border-right: 1px solid #ddd; white-space: nowrap; }
.tab button, .tab svg { width: 7px; height: 7px; }
.tab a { line-height: 17px; }
.tab.on { width: 84px; padding-left: 10px; background: #f9f9f9; font-family: "DejaVu Sans Condensed", sans-serif; font-weight: 700; }

.filters { display: grid; grid-template-columns: repeat(11, minmax(0, 1fr)); gap: 9px; max-width: 1331px; padding: 8px 0 6px 3px; line-height: 13px; }
.filters label { display: flex; flex-wrap: wrap; align-content: flex-start; white-space: pre; }
.filters select, .textbox { width: 100%; height: 21px; }
select { appearance: none; background: #fff var(--chev) no-repeat right 4px center; }
.filters select { padding-left: 4px; color: #707070; border: 1px solid var(--edge); border-radius: 2px; }
.filters select.dark, .dark { color: #000; }
.textbox { display: flex; background: #fff; border-bottom: 1px solid var(--edge); }
.textbox input { flex: 1; padding-left: 4px; }
.textbox button { width: 18px; margin: 1px; border: 1px solid #d0d0d0; border-radius: 2px; }

.work { flex: 1; display: flex; border-top: 1px solid var(--rule); box-shadow: inset 0 1px #fff; }
.left { flex: 1; min-width: 0; display: flex; flex-direction: column; padding: 4px 0 5px 3px; }
.project { display: flex; align-items: center; height: 21px; }
.project label { width: 63px; }
.project input { flex: 1; height: 21px; padding-left: 3px; background: #fff; border-bottom: 1px solid var(--edge); }
.tasklist { flex: 1; margin-top: 3px; border: 1px solid #999; background: linear-gradient(#9db4cf, #9db4cf) no-repeat right 580px top / 1px 100%, #fff; }
.tasklist table { width: 100%; table-layout: fixed; border-collapse: separate; border-spacing: 0; }
.tasklist th, .tasklist td { padding: 0; height: 24px; font-weight: 400; text-align: center; border-right: 1px solid #e0e0e0; white-space: nowrap; }
.tasklist th { padding-top: 1px; }
.tasklist svg { margin: 0 auto; width: 16px; height: 16px; }
.tasklist .name { text-align: left; padding-left: 5px; border-right-color: #9db4cf; }
.tasklist .r { text-align: right; padding-right: 5px; }
.tasklist td { height: 17px; line-height: 15px; background: #bad6ff; border: solid #000; border-width: 1px 0; box-shadow: inset -1px 0 #aab4c4; }
.tasklist td.r { padding-right: 2px; }
.tasklist td.name { padding: 0; border-width: 0; background: #eae8ff; }
.tasklist td.end { background: #eae8ff; border-color: transparent transparent #bbb; }
.tasklist th:last-child { border: 0; }
.cell { display: flex; align-items: center; height: 17px; }
.tree { width: 12px; margin-left: 11px; border-top: 1px dotted #888; }
.task { flex: 1; height: 17px; margin-left: 22px; padding-left: 1px; line-height: 16px; font-family: "DejaVu Sans Condensed", sans-serif; font-weight: 700; background: #bad6ff; border: 1px solid #000; border-right: 0; }
input[type="checkbox"] { appearance: none; width: 13px; height: 13px; flex: none; border: 1px solid #555; border-radius: 3px; background: #f4f4f4; }
.prio span { display: block; width: 14px; margin: 0 auto; background: #0000f0; color: #fff; }
.w-id { width: 23px; }
.w-ic { width: 19px; }
.w-pc, .w-tag { width: 35px; }
.w-est { width: 31px; }
.w-sp { width: 40px; }
.w-date { width: 62px; }
.w-rec { width: 46px; }
.w-all { width: 48px; }
.w-sta { width: 43px; }
.w-cat { width: 33px; }
.w-end { width: 8px; }

.views { display: flex; height: 18px; }
.views a { display: flex; align-items: center; gap: 6px; padding: 0 3px 0 4px; background: #f0f0f0; border-right: 1px solid #ccc; line-height: 16px; white-space: nowrap; }
.views a.on { padding: 0 10px 0 7px; gap: 8px; background: #f9f9f9; font-family: "DejaVu Sans Condensed", sans-serif; font-weight: 700; }
.views i { align-self: flex-end; width: 7px; height: 7px; margin: 0 0 1px 2px; background: linear-gradient(45deg, transparent 42%, #000 42% 58%, transparent 58%), linear-gradient(-45deg, transparent 42%, #000 42% 58%, transparent 58%); }
.day { font: bold 8px "DejaVu Sans Condensed", sans-serif; fill: #333; }
.wc { font: bold 10px Roboto, sans-serif; }

.vsplit { width: 6px; margin-top: 3px; background: linear-gradient(#8a9bbd, #8a9bbd) no-repeat 2px center / 2px 20px, var(--sky); }
.right { display: flex; flex-direction: column; width: 480px; padding: 4px 3px 3px 0; }
.comhead { display: flex; align-items: center; height: 21px; }
.comhead label { width: 65px; }
.comhead button { width: 23px; }
.ctype { display: flex; align-items: center; width: 128px; height: 21px; margin-right: 9px; padding-left: 4px; background: #fff; border: 1px solid var(--edge); border-radius: 2px; }
.ctype select { flex: 1; padding-left: 1px; }
textarea { height: 427px; margin-top: 3px; background: #fff; border: 1px solid #aaa; resize: none; }
.hsplit { height: 6px; background: linear-gradient(#8a9bbd, #8a9bbd) no-repeat center / 20px 2px, var(--sky); }
.atthead { display: flex; align-items: center; height: 26px; padding-bottom: 2px; }
.atthead button { width: 22px; }
.attrs { position: relative; flex: 1; padding: 1px 2px 0 1px; background: #fff; border: 1px solid #777e8c; }
.attrs table { width: 100%; table-layout: fixed; border-collapse: separate; border-spacing: 0; }
.attrs th, .attrs td { height: 20px; padding: 0; border-bottom: 1px solid #c0c0c0; text-align: left; font-weight: 400; }
.attrs th { width: 236px; padding: 2px 0 0 1px; border-right: 1px solid #c0c0c0; }
.attrs td { border-right: 1px solid #c0c0c0; }
.attrs label { display: block; }
.attrs td div { display: flex; align-items: center; height: 19px; }
.attrs td .mid { justify-content: center; }
.attrs input:not([type]), .attrs select { flex: 1; height: 19px; padding: 2px 0 0 2px; }
.attrs select { background: var(--chev) no-repeat right 3px center, linear-gradient(#d4d4d4, #d4d4d4) no-repeat right 16px top / 1px 100%; }
.attrs td button { width: 17px; height: 19px; border-left: 1px solid #d4d4d4; font-weight: 700; }
.attrs td .date { width: 33px; }
.attrs button b { border: 4px solid transparent; border-top-color: #3f5f90; border-bottom: 0; }
.attrs button b.blk { border-top-color: #000; }
.attrs input.colour:not([type]) { background: #a3d4ff; border: 1px solid #000; padding: 1px 0 0 1px; }
.attrs td .hot { border: 1px solid #0078d4; background: #e5f1fb; border-radius: 2px; }
.swatch { width: 13px; height: 13px; margin: 0 4px 0 2px; background: #0000f0; border: 1px solid #000080; }
.off { color: #777; }
.off td { background: #f0f0f0; }
.mark { position: absolute; right: 18px; bottom: 6px; width: 190px; height: 60px; overflow: visible; pointer-events: none; }
.mark g { filter: drop-shadow(-2px 3px 3px rgba(0, 0, 0, .6)); opacity: .8; }
.mark text { font: bold 52px "DejaVu Sans", sans-serif; fill: #fff; }

.status { display: flex; align-items: center; height: 21px; padding-left: 3px; background: linear-gradient(var(--pale), var(--sky)); border-top: 1px solid var(--rule); box-shadow: inset 0 1px #fff; }
.status span { line-height: 18px; margin-top: 2px; }
.grow { flex: 1; }
.s1, .s2, .s3, .s4 { padding-left: 3px; border-left: 1px solid #7f8fa8; }
.s1 { width: 30px; }
.s2 { width: 62px; }
.s3 { width: 83px; }
.s4 { width: 90px; }
```
